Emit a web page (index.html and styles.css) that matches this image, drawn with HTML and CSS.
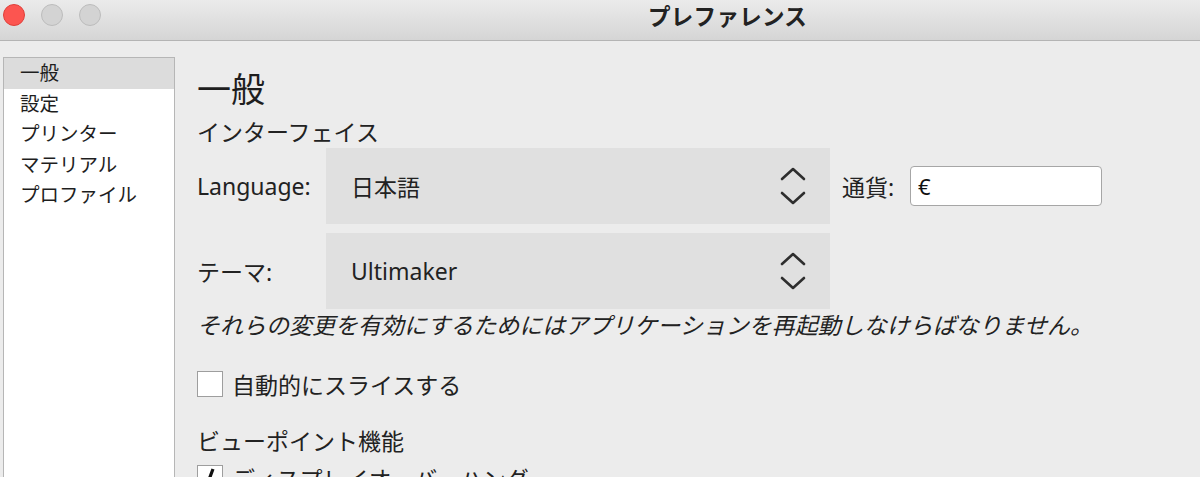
FILE: index.html
```html
<!DOCTYPE html>
<html lang="ja">
<head>
<meta charset="utf-8">
<title>プレファレンス</title>
<link rel="stylesheet" href="styles.css">
</head>
<body>
<div class="window">
  <header class="titlebar">
    <div class="lights">
      <span class="light close"></span>
      <span class="light"></span>
      <span class="light"></span>
    </div>
    <div class="title">プレファレンス</div>
  </header>
  <div class="main">
    <nav class="sidebar">
      <div class="nav-item active">一般</div>
      <div class="nav-item">設定</div>
      <div class="nav-item">プリンター</div>
      <div class="nav-item">マテリアル</div>
      <div class="nav-item">プロファイル</div>
    </nav>
    <section class="content">
      <h1 class="heading">一般</h1>
      <div class="subheading">インターフェイス</div>
      <div class="row">
        <div class="label">Language:</div>
        <div class="select">
          <span class="select-value">日本語</span>
          <svg class="chev" width="26" height="40" viewBox="0 0 26 40"><path d="M2 13 L13 3 L24 13" fill="none" stroke="#2e2e2e" stroke-width="2.6" stroke-linecap="round" stroke-linejoin="round"/><path d="M2 27 L13 37 L24 27" fill="none" stroke="#2e2e2e" stroke-width="2.6" stroke-linecap="round" stroke-linejoin="round"/></svg>
        </div>
        <div class="currency-label">通貨:</div>
        <div class="input">€</div>
      </div>
      <div class="row row2">
        <div class="label">テーマ:</div>
        <div class="select">
          <span class="select-value">Ultimaker</span>
          <svg class="chev" width="26" height="40" viewBox="0 0 26 40"><path d="M2 13 L13 3 L24 13" fill="none" stroke="#2e2e2e" stroke-width="2.6" stroke-linecap="round" stroke-linejoin="round"/><path d="M2 27 L13 37 L24 27" fill="none" stroke="#2e2e2e" stroke-width="2.6" stroke-linecap="round" stroke-linejoin="round"/></svg>
        </div>
      </div>
      <div class="note">それらの変更を有効にするためにはアプリケーションを再起動しなけらばなりません。</div>
      <div class="check-row">
        <span class="checkbox"></span>
        <span class="check-label">自動的にスライスする</span>
      </div>
      <div class="subheading section">ビューポイント機能</div>
      <div class="check-row check2">
        <span class="checkbox checked"><svg width="24" height="24" viewBox="0 0 24 24"><path d="M5 12 L9 19 L15 3" fill="none" stroke="#111" stroke-width="3.2" stroke-linejoin="round"/></svg></span>
        <span class="check-label">ディスプレイオーバーハング</span>
      </div>
    </section>
  </div>
</div>
</body>
</html>
```
FILE: styles.css
```css
html, body {
  margin: 0;
  padding: 0;
}
body {
  width: 1200px;
  height: 477px;
  overflow: hidden;
  background: #ececec;
  font-family: "Noto Sans", "Noto Sans CJK JP", sans-serif;
  color: #222;
}
.window {
  width: 1200px;
  height: 477px;
  overflow: hidden;
}
.titlebar {
  height: 40px;
  border-bottom: 1px solid #b4b4b4;
  background: linear-gradient(#ebebeb, #d5d5d5);
  display: flex;
  align-items: center;
}
.lights {
  display: flex;
  gap: 16px;
  padding-left: 3px;
  margin-top: -10px;
}
.light {
  width: 20px;
  height: 20px;
  border-radius: 50%;
  background: #d3d3d3;
  border: 1px solid #bcbcbc;
}
.light.close {
  background: #fc5550;
  border-color: #df3f39;
}
.title {
  margin-left: 547px;
  font-size: 22.5px;
  font-weight: 700;
  color: #222;
  margin-top: -10px;
  letter-spacing: 0.3px;
}
.main {
  display: flex;
  align-items: flex-start;
}
.sidebar {
  margin-left: 3px;
  margin-top: 16px;
  width: 170px;
  height: 440px;
  background: #fff;
  border: 1px solid #b6b6b6;
  flex: none;
}
.nav-item {
  height: 30.5px;
  line-height: 30.5px;
  padding-left: 16px;
  font-size: 19.5px;
  color: #1e1e1e;
}
.nav-item.active {
  background: #dcdcdc;
}
.content {
  padding-left: 22px;
  padding-top: 28px;
}
.heading {
  margin: 0;
  font-size: 34px;
  font-weight: 400;
  line-height: 40px;
  color: #1e1e1e;
}
.subheading {
  margin-top: 8px;
  font-size: 23px;
  line-height: 30px;
  color: #222;
}
.row {
  display: flex;
  align-items: center;
  margin-top: 1px;
}
.row2 {
  margin-top: 9px;
}
.label {
  width: 129px;
  font-size: 23px;
  color: #222;
}
.select {
  width: 504px;
  height: 76px;
  background: #e0e0e0;
  display: flex;
  align-items: center;
  justify-content: space-between;
  padding: 0 24px 0 25px;
  box-sizing: border-box;
}
.select-value {
  font-size: 23px;
  color: #222;
}
.currency-label {
  margin-left: 12px;
  font-size: 23px;
  color: #222;
  width: 68px;
}
.input {
  width: 192px;
  height: 40px;
  box-sizing: border-box;
  background: #fff;
  border: 1px solid #a6a6a6;
  border-radius: 4px;
  font-size: 22px;
  line-height: 38px;
  padding-left: 7px;
  color: #111;
}
.note {
  margin-top: 1px;
  font-size: 23px;
  line-height: 30px;
  font-style: italic;
  color: #222;
}
.check-row {
  display: flex;
  align-items: center;
  margin-top: 31px;
  height: 26px;
}
.checkbox {
  width: 24px;
  height: 24px;
  background: #fff;
  border: 1px solid #9e9e9e;
  flex: none;
  display: flex;
  align-items: center;
  justify-content: center;
}
.check-label {
  margin-left: 9px;
  font-size: 23px;
  color: #222;
}
.section {
  margin-top: 29px;
}
.check2 {
  margin-top: 9px;
}
```
